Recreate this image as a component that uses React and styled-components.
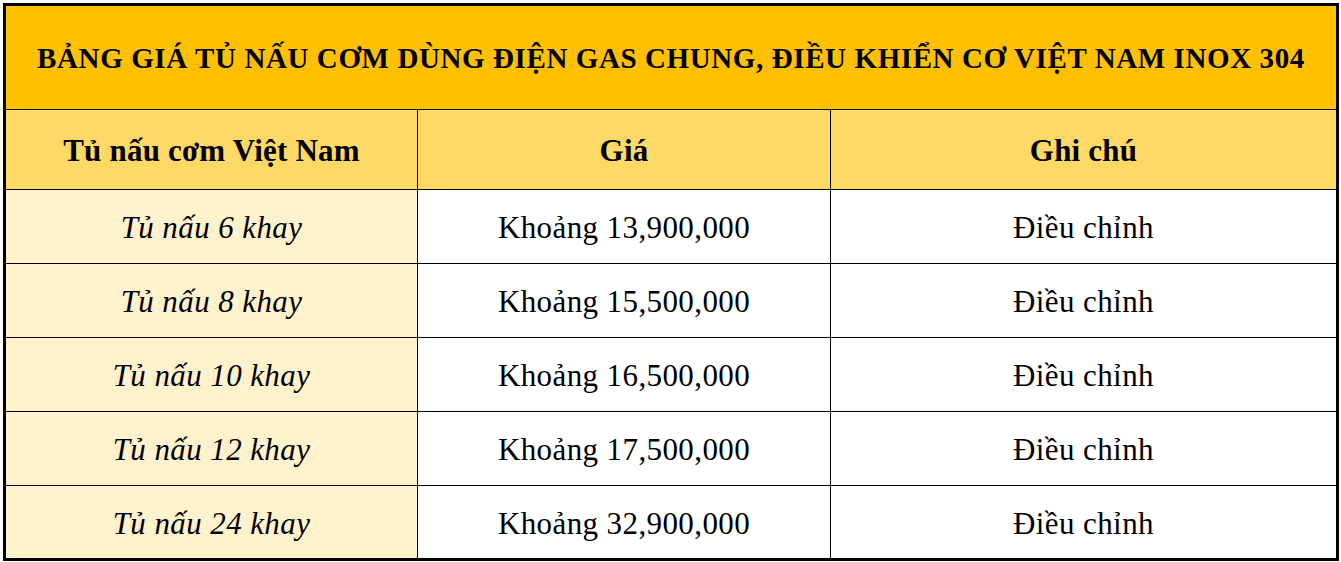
import styled, { createGlobalStyle } from 'styled-components'

const GlobalStyle = createGlobalStyle`
  html, body {
    margin: 0;
    padding: 0;
    background: #ffffff;
  }
  body {
    font-family: 'Liberation Serif', 'Times New Roman', serif;
    color: #000000;
  }
`

const PriceTable = styled.div`
  display: grid;
  grid-template-columns: 412px 413px 505px;
  width: 1336px;
  margin: 3px 0 0 3px;
  border: 3px solid #000;
  box-sizing: border-box;
`

const TitleCell = styled.div`
  grid-column: 1 / -1;
  height: 104px;
  display: flex;
  align-items: center;
  justify-content: center;
  padding-top: 1px;
  background: #ffc000;
  border-bottom: 1px solid #000;
  box-sizing: border-box;
  font-size: 29px;
  font-weight: 700;
  letter-spacing: 0.6px;
  white-space: nowrap;
`

const Cell = styled.div`
  display: flex;
  align-items: center;
  justify-content: center;
  height: ${(p) => (p.$header ? 80 : p.$last ? 72 : 74)}px;
  padding-top: 3px;
  box-sizing: border-box;
  border-right: ${(p) => (p.$endCol ? 'none' : '1px solid #000')};
  border-bottom: ${(p) => (p.$last ? 'none' : '1px solid #000')};
  background: ${(p) => p.$bg};
  font-size: 31px;
  font-weight: ${(p) => (p.$header ? 700 : 400)};
  font-style: ${(p) => (p.$italic ? 'italic' : 'normal')};
  letter-spacing: ${(p) => (p.$header ? 0.2 : 0.4)}px;
  white-space: nowrap;
`

const rows = [
  { name: 'Tủ nấu 6 khay', price: 'Khoảng 13,900,000' },
  { name: 'Tủ nấu 8 khay', price: 'Khoảng 15,500,000' },
  { name: 'Tủ nấu 10 khay', price: 'Khoảng 16,500,000' },
  { name: 'Tủ nấu 12 khay', price: 'Khoảng 17,500,000' },
  { name: 'Tủ nấu 24 khay', price: 'Khoảng 32,900,000' },
]

export default function App() {
  return (
    <>
      <GlobalStyle />
      <PriceTable>
        <TitleCell>BẢNG GIÁ TỦ NẤU CƠM DÙNG ĐIỆN GAS CHUNG, ĐIỀU KHIỂN CƠ VIỆT NAM INOX 304</TitleCell>
        <Cell $header $bg="#ffd966">Tủ nấu cơm Việt Nam</Cell>
        <Cell $header $bg="#ffd966">Giá</Cell>
        <Cell $header $endCol $bg="#ffd966">Ghi chú</Cell>
        {rows.map((row, i) => {
          const last = i === rows.length - 1
          return [
            <Cell key={`n${i}`} $italic $last={last} $bg="#fff2cc">{row.name}</Cell>,
            <Cell key={`p${i}`} $last={last} $bg="#ffffff">{row.price}</Cell>,
            <Cell key={`c${i}`} $last={last} $endCol $bg="#ffffff">Điều chỉnh</Cell>,
          ]
        })}
      </PriceTable>
    </>
  )
}
